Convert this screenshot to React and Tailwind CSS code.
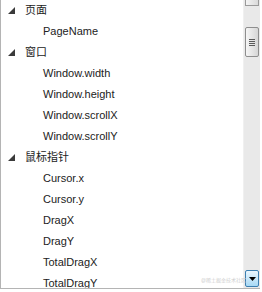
import React from "react";

const tree = [
  { label: "页面", items: ["PageName"] },
  { label: "窗口", items: ["Window.width", "Window.height", "Window.scrollX", "Window.scrollY"] },
  { label: "鼠标指针", items: ["Cursor.x", "Cursor.y", "DragX", "DragY", "TotalDragX", "TotalDragY"] },
];

const Expanded = () => (
  <svg width="7" height="7" viewBox="0 0 7 7" className="shrink-0">
    <polygon points="7,0 7,7 0,7" fill="#3a3a3a" />
  </svg>
);

const App = () => {
  return (
    <div
      className="w-[262px] h-[292px] bg-white overflow-hidden"
      style={{ fontFamily: '"Liberation Sans", "Noto Sans CJK SC", sans-serif' }}
    >
      <div className="relative flex w-[260px] h-[289px] border-l border-b border-[#b4b4b4]">
        <div className="flex-1 overflow-hidden text-[11px] text-[#222]">
          {tree.map((group) => (
            <div key={group.label}>
              <div className="flex items-center h-[21px] pl-[7px]">
                <Expanded />
                <span className="ml-[10px]">{group.label}</span>
              </div>
              {group.items.map((item) => (
                <div key={item} className="flex items-center h-[21px] pl-[42px]">
                  {item}
                </div>
              ))}
            </div>
          ))}
        </div>

        <div className="flex flex-col w-[17px] bg-[#e9e9e9] border-l border-[#f0f0f0]">
          <div className="h-[6px] mx-[1px] border-x border-b border-[#9a9a9a] bg-gradient-to-r from-[#f4f4f4] to-[#dadada]" />
          <div className="mt-[21px] mx-[1px] h-[30px] flex flex-col items-center justify-center gap-[1px] rounded-[2px] border border-[#8e8e8e] bg-gradient-to-r from-[#f6f6f6] to-[#d6d6d6]">
            <div className="w-[6px] h-[1px] bg-[#5a5a5a]" />
            <div className="w-[6px] h-[1px] bg-[#5a5a5a]" />
            <div className="w-[6px] h-[1px] bg-[#5a5a5a]" />
            <div className="w-[6px] h-[1px] bg-[#5a5a5a]" />
          </div>
          <div className="flex-1" />
          <div className="h-[17px] mx-[1px] mb-[1px] flex items-center justify-center rounded-[2px] border border-[#3c7fb1] bg-gradient-to-b from-[#eaf6fd] to-[#a7d9f5]">
            <svg width="7" height="4" viewBox="0 0 7 4">
              <polygon points="0,0 7,0 3.5,4" fill="#000" />
            </svg>
          </div>
        </div>

        <span className="absolute right-[14px] bottom-[5px] text-[5px] leading-none text-[#cfcfcf]">
          @稀土掘金技术社区
        </span>
      </div>
    </div>
  );
};

export default App;
